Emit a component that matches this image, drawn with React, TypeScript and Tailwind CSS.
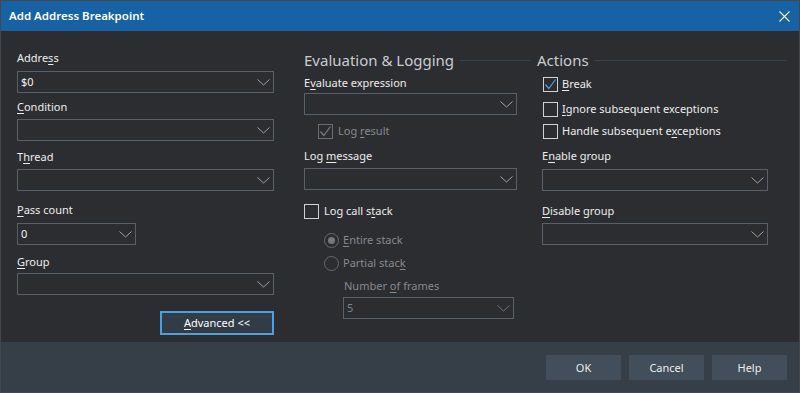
import React from 'react';

// Mnemonic underline
function M({ children }: { children: React.ReactNode }) {
    return <span className="underline underline-offset-[2px] decoration-1">{children}</span>;
}

function Label({ className = '', children }: { className?: string; children: React.ReactNode }) {
    return <div className={`h-[16px] pt-[1px] ${className}`}>{children}</div>;
}

function Chevron({ dim }: { dim?: boolean }) {
    return (
        <svg className="ml-auto shrink-0" width="13" height="7" viewBox="0 0 13 7">
            <polyline points="0.5,0.5 6.5,6 12.5,0.5" fill="none" stroke={dim ? '#6c747b' : '#9aa3ab'} strokeWidth="1" />
        </svg>
    );
}

function Combo({ value, width, disabled }: { value?: string; width: string; disabled?: boolean }) {
    return (
        <div className={`${width} h-[22px] border border-[#56616b] flex items-center pl-[3px] pr-[3px]`}>
            <span className={disabled ? 'text-[#7d8287]' : 'text-[#f0f0f0]'}>{value}</span>
            <Chevron dim={disabled} />
        </div>
    );
}

function CheckBox({ checked, disabled }: { checked?: boolean; disabled?: boolean }) {
    const border = disabled ? 'border-[#6b6e72]' : 'border-[#cfd1d3]';
    const tick = disabled ? '#7a7d80' : '#4a9ee2';
    return (
        <div className={`w-[15px] h-[15px] border ${border} shrink-0 flex items-center justify-center`}>
            {checked && (
                <svg width="13" height="13" viewBox="0 0 13 13">
                    <polyline points="1.5,6.5 4.8,10.5 11.5,1.5" fill="none" stroke={tick} strokeWidth="1.2" />
                </svg>
            )}
        </div>
    );
}

function Radio({ checked }: { checked?: boolean }) {
    return (
        <div className="w-[15px] h-[15px] rounded-full border border-[#66696d] shrink-0 flex items-center justify-center">
            {checked && <div className="w-[7px] h-[7px] rounded-full bg-[#75787c]" />}
        </div>
    );
}

function Heading({ title }: { title: string }) {
    return (
        <div className="h-[20px] flex items-center">
            <span className="text-[15px] leading-[20px] text-[#c9ccd0]">{title}</span>
            <div className="flex-1 h-px bg-[#38434e] ml-[6px] mt-[1px]" />
        </div>
    );
}

export default function App() {
    return (
        <div className="w-[800px] h-[393px] border border-[#44474c] flex flex-col bg-[#2c2d31] text-[11px] leading-[16px] text-[#ededed] font-['Noto_Sans','Open_Sans',sans-serif] select-none">
            {/* title bar */}
            <div className="h-[30px] bg-[#1662a4] flex items-center pl-[8px] pr-[9px] shrink-0">
                <span className="text-[11.5px] font-semibold text-white">Add Address Breakpoint</span>
                <svg className="ml-auto" width="11" height="11" viewBox="0 0 11 11">
                    <path d="M0.5 0.5 L10.5 10.5 M10.5 0.5 L0.5 10.5" stroke="#f2f2f2" strokeWidth="1.1" />
                </svg>
            </div>

            {/* body */}
            <div className="flex-1 flex pl-[16px]">
                {/* left column */}
                <div className="w-[257px] flex flex-col pt-[18px]">
                    <Label>Addre<M>s</M>s</Label>
                    <div className="mt-[6px]"><Combo value="$0" width="w-[257px]" /></div>
                    <Label className="mt-[5px]"><M>C</M>ondition</Label>
                    <div className="mt-[5px]"><Combo width="w-[257px]" /></div>
                    <Label className="mt-[7px]">T<M>h</M>read</Label>
                    <div className="mt-[5px]"><Combo width="w-[257px]" /></div>
                    <Label className="mt-[10px]"><M>P</M>ass count</Label>
                    <div className="mt-[6px]"><Combo value="0" width="w-[119px]" /></div>
                    <Label className="mt-[8px]"><M>G</M>roup</Label>
                    <div className="mt-[4px]"><Combo width="w-[257px]" /></div>
                    <button className="self-end mt-[16px] w-[114px] h-[24px] border-2 border-[#4d9fe0] bg-[#323c46] text-white flex items-center justify-center">
                        <span><M>A</M>dvanced &lt;&lt;</span>
                    </button>
                </div>

                {/* middle column */}
                <div className="w-[226px] ml-[30px] flex flex-col pt-[19px]">
                    <Heading title="Evaluation & Logging" />
                    <Label className="mt-[4px]">E<M>v</M>aluate expression</Label>
                    <div className="mt-[3px]"><Combo width="w-[213px]" /></div>
                    <div className="h-[16px] mt-[8px] ml-[14px] flex items-center gap-[5px] text-[#86898d]">
                        <CheckBox checked disabled />
                        <span>Log <M>r</M>esult</span>
                    </div>
                    <Label className="mt-[8px]">Log <M>m</M>essage</Label>
                    <div className="mt-[5px]"><Combo width="w-[213px]" /></div>
                    <div className="h-[16px] mt-[13px] flex items-center gap-[5px]">
                        <CheckBox />
                        <span>Log call s<M>t</M>ack</span>
                    </div>
                    <div className="h-[16px] mt-[13px] ml-[20px] flex items-center gap-[4px] text-[#86898d]">
                        <Radio checked />
                        <span><M>E</M>ntire stack</span>
                    </div>
                    <div className="h-[16px] mt-[7px] ml-[20px] flex items-center gap-[4px] text-[#86898d]">
                        <Radio />
                        <span>Partial stac<M>k</M></span>
                    </div>
                    <Label className="mt-[6px] ml-[40px] text-[#86898d]">Number <M>o</M>f frames</Label>
                    <div className="mt-[4px] ml-[39px]"><Combo value="5" width="w-[171px]" disabled /></div>
                </div>

                {/* right column */}
                <div className="w-[249px] ml-[7px] flex flex-col pt-[19px]">
                    <Heading title="Actions" />
                    <div className="h-[16px] mt-[6px] ml-[6px] flex items-center gap-[4px]">
                        <CheckBox checked />
                        <span><M>B</M>reak</span>
                    </div>
                    <div className="h-[16px] mt-[9px] ml-[6px] flex items-center gap-[4px]">
                        <CheckBox />
                        <span><M>I</M>gnore subsequent exceptions</span>
                    </div>
                    <div className="h-[16px] mt-[6px] ml-[6px] flex items-center gap-[4px]">
                        <CheckBox />
                        <span>Handle subsequent e<M>x</M>ceptions</span>
                    </div>
                    <Label className="mt-[8px] ml-[5px]">E<M>n</M>able group</Label>
                    <div className="mt-[6px] ml-[5px]"><Combo width="w-[226px]" /></div>
                    <Label className="mt-[11px] ml-[5px]"><M>D</M>isable group</Label>
                    <div className="mt-[5px] ml-[5px]"><Combo width="w-[226px]" /></div>
                </div>
            </div>

            {/* footer */}
            <div className="h-[50px] shrink-0 bg-[#363f48] flex justify-end items-start pt-[13px] pr-[12px] gap-[8px]">
                <button className="w-[75px] h-[25px] bg-[#424e59] text-[#ececec]">OK</button>
                <button className="w-[75px] h-[25px] bg-[#424e59] text-[#ececec]">Cancel</button>
                <button className="w-[75px] h-[25px] bg-[#424e59] text-[#ececec]">Help</button>
            </div>
        </div>
    );
}
